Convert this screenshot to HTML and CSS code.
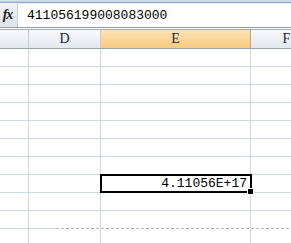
FILE: index.html
```html
<!DOCTYPE html>
<html>
<head>
<meta charset="utf-8">
<link rel="stylesheet" href="styles.css">
</head>
<body>
<div class="app">
  <div class="topstrip"></div>
  <div class="formulabar">
    <div class="fx"><span>fx</span></div>
    <div class="input">411056199008083000</div>
  </div>
  <div class="sheet">
    <div class="hdr"></div>
    <div class="hdr">D</div>
    <div class="hdr sel">E</div>
    <div class="hdr">F</div>

    <div class="c"></div><div class="c"></div><div class="c"></div><div class="c"></div>
    <div class="c"></div><div class="c"></div><div class="c"></div><div class="c"></div>
    <div class="c"></div><div class="c"></div><div class="c"></div><div class="c"></div>
    <div class="c"></div><div class="c"></div><div class="c"></div><div class="c"></div>
    <div class="c"></div><div class="c"></div><div class="c"></div><div class="c"></div>
    <div class="c"></div><div class="c"></div><div class="c"></div><div class="c"></div>
    <div class="c"></div><div class="c"></div><div class="c"></div><div class="c"></div>
    <div class="c"></div><div class="c"></div><div class="c active">4.11056E+17</div><div class="c"></div>
    <div class="c"></div><div class="c"></div><div class="c"></div><div class="c"></div>
    <div class="c"></div><div class="c"></div><div class="c"></div><div class="c"></div>
    <div class="c"></div><div class="c"></div><div class="c"></div><div class="c"></div>
  </div>
  <div class="pagebreak"></div>
</div>
</body>
</html>
```
FILE: styles.css
```css
html, body {
  margin: 0;
  padding: 0;
  background: #ffffff;
}
.app {
  position: relative;
  width: 291px;
  height: 243px;
  overflow: hidden;
}
.topstrip {
  height: 3px;
  background: linear-gradient(#d7e3f1, #b9cde4);
  border-bottom: 1px solid #8ea9c9;
  box-sizing: border-box;
}
.formulabar {
  display: flex;
  height: 25px;
  background: #e7ecf3;
  border-bottom: 1px solid #9a9a9a;
  box-sizing: border-box;
}
.fx {
  width: 17px;
  display: flex;
  align-items: center;
  justify-content: center;
  background: linear-gradient(#f1f3f7, #dde3ec);
}
.fx span {
  font-family: "Liberation Serif", serif;
  font-style: italic;
  font-weight: bold;
  font-size: 14px;
  color: #222;
  letter-spacing: -1px;
  margin-left: -2px;
}
.input {
  flex: 1;
  background: #ffffff;
  margin-top: 1px;
  border-left: 1px solid #c6ccd6;
  font-family: "Liberation Mono", monospace;
  font-size: 13px;
  line-height: 24px;
  padding-left: 9px;
  color: #000;
}
.sheet {
  display: grid;
  grid-template-columns: 29px 72px 150px 72px;
  grid-template-rows: 20px repeat(11, 18px);
  width: 323px;
  margin-top: 1px;
}
.hdr {
  box-sizing: border-box;
  border-top: 1px solid #a4a9b1;
  border-bottom: 1px solid #9aa3b0;
  border-right: 1px solid #c5cbd5;
  background: linear-gradient(#f9fafc, #e3e7ee);
  font-family: "Liberation Serif", serif;
  font-size: 14px;
  line-height: 18px;
  text-align: center;
  color: #1e2836;
}
.hdr.sel {
  background: linear-gradient(#fbe3b2, #f6cb80);
  border-right-color: #c9a46a;
}
.c {
  box-sizing: border-box;
  border-right: 1px solid #d0d7e5;
  border-bottom: 1px solid #d0d7e5;
}
.active {
  position: relative;
  font-family: "Liberation Mono", monospace;
  font-size: 13px;
  line-height: 17px;
  text-align: right;
  padding-right: 3px;
  color: #000;
}
.active::after {
  content: "";
  position: absolute;
  left: -1px;
  top: -1px;
  right: -2px;
  bottom: -1px;
  border: 2px solid #000;
}
.active::before {
  content: "";
  position: absolute;
  right: -4px;
  bottom: -3px;
  width: 5px;
  height: 5px;
  background: #000;
  border: 1px solid #fff;
  z-index: 2;
}
.pagebreak {
  position: absolute;
  left: 56px;
  right: 0;
  top: 228px;
  height: 1px;
  background: repeating-linear-gradient(90deg, #b8b8b8 0 3px, #ffffff 3px 5px);
}
```
